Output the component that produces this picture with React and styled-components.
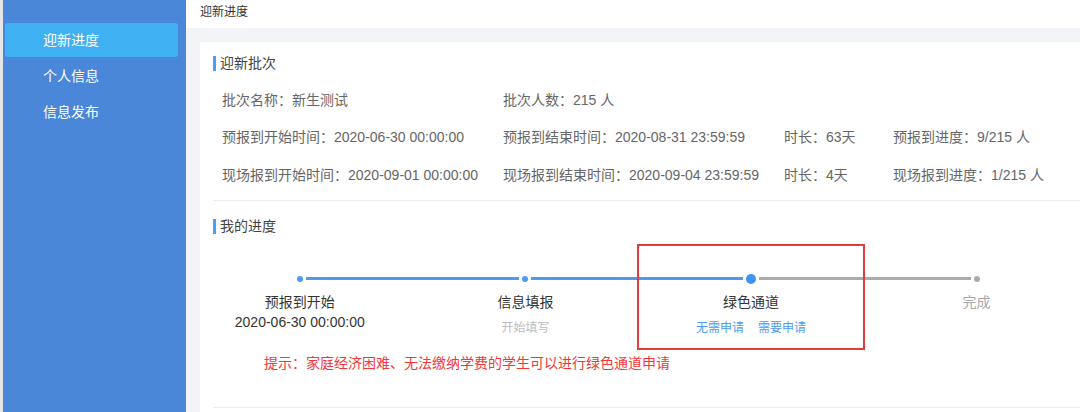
import React from "react";
import styled, { createGlobalStyle } from "styled-components";

const Global = createGlobalStyle`
  html, body { margin: 0; padding: 0; }
  body {
    font-family: "Liberation Sans", "Noto Sans CJK SC", sans-serif;
    background: #f2f4f8;
  }
  * { box-sizing: border-box; }
`;

const Page = styled.div`
  display: flex;
  width: 1080px;
  height: 412px;
  overflow: hidden;
  background: #f2f4f8;
`;

const Edge = styled.div`
  width: 3px;
  flex: none;
  background: #e4e6ea;
`;

const Sidebar = styled.nav`
  width: 183px;
  flex: none;
  background: #4a87d9;
  padding: 23px 8px 0 2px;
  display: flex;
  flex-direction: column;
  gap: 2px;
`;

const NavItem = styled.div`
  height: 34px;
  line-height: 34px;
  padding-left: 38px;
  border-radius: 3px;
  font-size: 14px;
  color: #ffffff;
  background: ${(p) => (p.$active ? "#3fb1f3" : "transparent")};
`;

const Main = styled.main`
  flex: 1;
  display: flex;
  flex-direction: column;
  min-width: 0;
`;

const TopBar = styled.div`
  height: 28px;
  flex: none;
  background: #ffffff;
  padding-left: 14px;
  font-size: 12px;
  line-height: 24px;
  color: #333;
`;

const Content = styled.div`
  flex: 1;
  padding: 14px 0 0 14px;
  display: flex;
`;

const Card = styled.section`
  position: relative;
  flex: 1;
  background: #ffffff;
  padding-left: 13px;
  display: flex;
  flex-direction: column;
`;

const SectionTitle = styled.h3`
  margin: ${(p) => p.$top}px 0 0 0;
  height: 15px;
  border-left: 3px solid #4a9df0;
  padding-left: 4px;
  font-size: 14px;
  font-weight: normal;
  line-height: 14px;
  color: #444;
`;

const InfoGrid = styled.div`
  margin-top: 10px;
  padding-left: 9px;
  display: grid;
  grid-template-columns: 281px 281px 109px auto;
  grid-auto-rows: 37.5px;
  align-items: center;
  font-size: 14px;
  line-height: 16px;
  color: #666;
  white-space: nowrap;
`;

const Cell = styled.div`
  grid-column: ${(p) => p.$col};
`;

const Divider = styled.div`
  margin-top: ${(p) => p.$top}px;
  height: 1px;
  background: #ececec;
  flex: none;
`;

const Steps = styled.div`
  margin: 40px 0 0 -26px;
  display: flex;
`;

const Step = styled.div`
  width: 225.6px;
  flex: none;
  display: flex;
  flex-direction: column;
  align-items: center;
`;

const Track = styled.div`
  width: 100%;
  height: 10px;
  display: flex;
  align-items: center;
`;

const Line = styled.div`
  flex: 1;
  height: 3px;
  background: ${(p) => p.$color || "transparent"};
  margin: ${(p) => (p.$side === "left" ? "0 3px 0 0" : "0 0 0 3px")};
`;

const Dot = styled.div`
  width: ${(p) => (p.$big ? 10 : 6)}px;
  height: ${(p) => (p.$big ? 10 : 6)}px;
  border-radius: 50%;
  flex: none;
  background: ${(p) => p.$color};
`;

const StepTitle = styled.div`
  margin-top: 8px;
  font-size: 14px;
  line-height: 20px;
  color: ${(p) => p.$color || "#333"};
  white-space: nowrap;
`;

const StepDesc = styled.div`
  font-size: 14px;
  line-height: 20px;
  color: #333;
  white-space: nowrap;
`;

const StepActions = styled.div`
  margin-top: 6px;
  display: flex;
  gap: 14px;
  font-size: 12px;
  line-height: 20px;
  color: ${(p) => p.$color};
  white-space: nowrap;
`;

const Hint = styled.p`
  margin: 15px 0 0 0;
  padding-left: 51px;
  font-size: 14px;
  line-height: 20px;
  color: #f2373a;
`;

const Annotation = styled.div`
  position: absolute;
  left: 437px;
  top: 202px;
  width: 228px;
  height: 106px;
  border: 2px solid #e53a3d;
  pointer-events: none;
`;

const BLUE = "#4c9bf0";
const GRAY = "#ababab";

const steps = [
  { title: "预报到开始", desc: "2020-06-30 00:00:00", left: null, right: BLUE, dot: BLUE },
  { title: "信息填报", actions: ["开始填写"], actionColor: "#bcbcbc", left: BLUE, right: BLUE, dot: BLUE },
  { title: "绿色通道", actions: ["无需申请", "需要申请"], actionColor: "#4d9cf2", left: BLUE, right: GRAY, dot: "#3d92f2", big: true },
  { title: "完成", titleColor: "#a8a8a8", left: GRAY, right: null, dot: GRAY },
];

export default function App() {
  return (
    <>
      <Global />
      <Page>
        <Edge />
        <Sidebar>
          <NavItem $active>迎新进度</NavItem>
          <NavItem>个人信息</NavItem>
          <NavItem>信息发布</NavItem>
        </Sidebar>
        <Main>
          <TopBar>迎新进度</TopBar>
          <Content>
            <Card>
              <SectionTitle $top={14}>迎新批次</SectionTitle>
              <InfoGrid>
                <Cell $col={1}>批次名称：新生测试</Cell>
                <Cell $col={2}>批次人数：215 人</Cell>
                <Cell $col={1}>预报到开始时间：2020-06-30 00:00:00</Cell>
                <Cell $col={2}>预报到结束时间：2020-08-31 23:59:59</Cell>
                <Cell $col={3}>时长：63天</Cell>
                <Cell $col={4}>预报到进度：9/215 人</Cell>
                <Cell $col={1}>现场报到开始时间：2020-09-01 00:00:00</Cell>
                <Cell $col={2}>现场报到结束时间：2020-09-04 23:59:59</Cell>
                <Cell $col={3}>时长：4天</Cell>
                <Cell $col={4}>现场报到进度：1/215 人</Cell>
              </InfoGrid>
              <Divider $top={6} />
              <SectionTitle $top={18}>我的进度</SectionTitle>
              <Steps>
                {steps.map((s) => (
                  <Step key={s.title}>
                    <Track>
                      <Line $side="left" $color={s.left} />
                      <Dot $color={s.dot} $big={s.big} />
                      <Line $side="right" $color={s.right} />
                    </Track>
                    <StepTitle $color={s.titleColor}>{s.title}</StepTitle>
                    {s.desc && <StepDesc>{s.desc}</StepDesc>}
                    {s.actions && (
                      <StepActions $color={s.actionColor}>
                        {s.actions.map((a) => (
                          <span key={a}>{a}</span>
                        ))}
                      </StepActions>
                    )}
                  </Step>
                ))}
              </Steps>
              <Hint>提示：家庭经济困难、无法缴纳学费的学生可以进行绿色通道申请</Hint>
              <Divider $top={34} />
              <Annotation />
            </Card>
          </Content>
        </Main>
      </Page>
    </>
  );
}
